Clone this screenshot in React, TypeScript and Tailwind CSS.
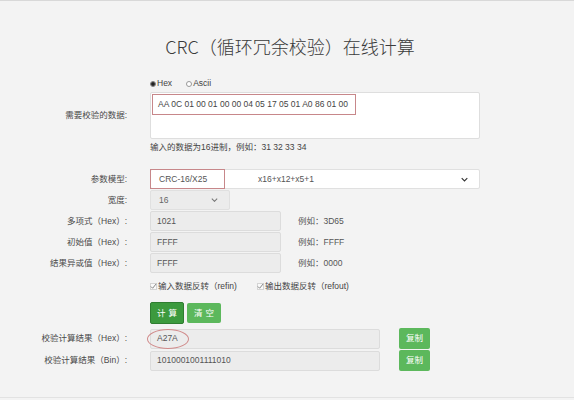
import React from "react";

const F = { fontFamily: '"Liberation Sans", "Noto Sans CJK SC", sans-serif' };

function Label({ children }: { children: React.ReactNode }) {
  return (
    <div className="w-[128px] shrink-0 text-right text-[8.5px] text-[#4a4a4a] pr-[1px]">{children}</div>
  );
}

function Chevron({ className = "" }: { className?: string }) {
  return (
    <svg viewBox="0 0 10 6" className={className} fill="none" stroke="currentColor" strokeWidth="1.6">
      <path d="M1 1l4 4 4-4" />
    </svg>
  );
}

function GrayInput({ value, w }: { value: string; w: string }) {
  return (
    <div className={`${w} h-[20px] bg-[#ececec] border border-[#dcdcdc] rounded-[2px] flex items-center pl-[6px] text-[8.5px] text-[#555]`}>
      {value}
    </div>
  );
}

function Check({ label }: { label: string }) {
  return (
    <div className="flex items-center">
      <span className="w-[7px] h-[7px] border border-[#d4d4d4] bg-[#fafafa] relative mr-[1px] flex items-center justify-center">
        <svg viewBox="0 0 8 8" className="w-[7px] h-[7px] absolute" fill="none" stroke="#777" strokeWidth="1">
          <path d="M1 4l2 2 4-5" />
        </svg>
      </span>
      <span>{label}</span>
    </div>
  );
}

export default function App() {
  return (
    <div className="w-[574px] h-[400px] bg-[#f3f3f3] border-t border-[#d8d8d8] relative overflow-hidden" style={F}>
      <div className="h-[397px] border-b border-[#e2e2e2]">
        <h1
          className="text-center text-[18px] text-[#3a3a3a] pt-[32px] leading-[26px] pl-[6px]"
          style={{ fontFamily: '"Noto Sans CJK SC", "Liberation Sans", sans-serif', fontWeight: 300 }}
        >
          CRC（循环冗余校验）在线计算
        </h1>

        {/* radio row */}
        <div className="flex mt-[19px] h-[11px] items-center text-[8.5px] text-[#444]">
          <div className="w-[150px] shrink-0" />
          <div className="flex items-center">
            <span className="w-[6px] h-[6px] rounded-full border border-[#777] flex items-center justify-center mr-[1px]">
              <span className="w-[4px] h-[4px] rounded-full bg-[#222]" />
            </span>
            Hex
          </div>
          <div className="flex items-center ml-[14px]">
            <span className="w-[6px] h-[6px] rounded-full border border-[#999] bg-white mr-[1px]" />
            Ascii
          </div>
        </div>

        {/* textarea row */}
        <div className="flex items-center mt-[3px]">
          <Label>需要校验的数据:</Label>
          <div className="ml-[22px] w-[330px] h-[47px] bg-white border border-[#dedede] rounded-[2px] relative">
            <div className="absolute left-[1px] top-[1px] w-[204px] h-[21px] border border-[#c7878a] flex items-center pl-[5px] text-[8.5px] text-[#444]">
              AA 0C 01 00 01 00 00 04 05 17 05 01 A0 86 01 00
            </div>
          </div>
        </div>

        {/* hint */}
        <div className="flex mt-[3px] h-[11px] items-center text-[8.5px] text-[#444]">
          <div className="w-[150px] shrink-0" />
          输入的数据为16进制，例如：31 32 33 34
        </div>

        {/* model */}
        <div className="flex items-center mt-[16px]">
          <Label>参数模型:</Label>
          <div className="ml-[22px] w-[330px] h-[20px] bg-white border border-[#e0e0e0] rounded-[2px] flex items-center text-[8.5px] text-[#555] relative">
            <div className="w-[75px] h-[20px] -ml-[1px] border border-[#c7878a] flex items-center pl-[8px]">CRC-16/X25</div>
            <div className="ml-[33px]">x16+x12+x5+1</div>
            <Chevron className="w-[7px] h-[5px] absolute right-[11px] text-[#333]" />
          </div>
        </div>

        {/* width */}
        <div className="flex items-center mt-[1px]">
          <Label>宽度:</Label>
          <div className="ml-[22px] w-[80px] h-[20px] bg-[#ececec] border border-[#e0e0e0] rounded-[2px] flex items-center pl-[8px] text-[8.5px] text-[#666] relative">
            16
            <Chevron className="w-[7px] h-[4px] absolute right-[11px] text-[#777]" />
          </div>
        </div>

        {[
          ["多项式（Hex）:", "1021", "例如：3D65"],
          ["初始值（Hex）:", "FFFF", "例如：FFFF"],
          ["结果异或值（Hex）:", "FFFF", "例如：0000"],
        ].map(([l, v, e]) => (
          <div key={l} className="flex items-center mt-[1px]">
            <Label>{l}</Label>
            <div className="ml-[22px]">
              <GrayInput value={v} w="w-[131px]" />
            </div>
            <div className="ml-[17px] text-[8.5px] text-[#555]">{e}</div>
          </div>
        ))}

        {/* checkboxes */}
        <div className="flex mt-[8px] h-[11px] items-center text-[8.5px] text-[#444]">
          <div className="w-[150px] shrink-0" />
          <Check label="输入数据反转（refin)" />
          <div className="ml-[20px]">
            <Check label="输出数据反转（refout)" />
          </div>
        </div>

        {/* buttons */}
        <div className="flex items-center mt-[10px]">
          <div className="w-[150px] shrink-0" />
          <button className="w-[34px] h-[22px] bg-[#3c9a3e] border border-[#2f7d31] rounded-[2px] text-white text-[8.5px] tracking-[3px] pl-[3px]">
            计算
          </button>
          <button className="ml-[3px] w-[34px] h-[20px] bg-[#5cb85c] rounded-[2px] text-white text-[8.5px] tracking-[3px] pl-[3px]">
            清空
          </button>
        </div>

        {/* results */}
        <div className="flex items-center mt-[4px]">
          <Label>校验计算结果（Hex）:</Label>
          <div className="ml-[22px] relative">
            <GrayInput value="A27A" w="w-[230px]" />
            <div className="absolute left-[-3px] top-[0px] w-[42px] h-[20px] rounded-[50%] border border-[#d08a8a]" />
          </div>
          <button className="ml-[19px] w-[31px] h-[21px] bg-[#5cb85c] rounded-[2px] text-white text-[8.5px]">复制</button>
        </div>
        <div className="flex items-center mt-[1px]">
          <Label>校验计算结果（Bin）:</Label>
          <div className="ml-[22px]">
            <GrayInput value="1010001001111010" w="w-[230px]" />
          </div>
          <button className="ml-[19px] w-[31px] h-[21px] bg-[#5cb85c] rounded-[2px] text-white text-[8.5px]">复制</button>
        </div>
      </div>
    </div>
  );
}
